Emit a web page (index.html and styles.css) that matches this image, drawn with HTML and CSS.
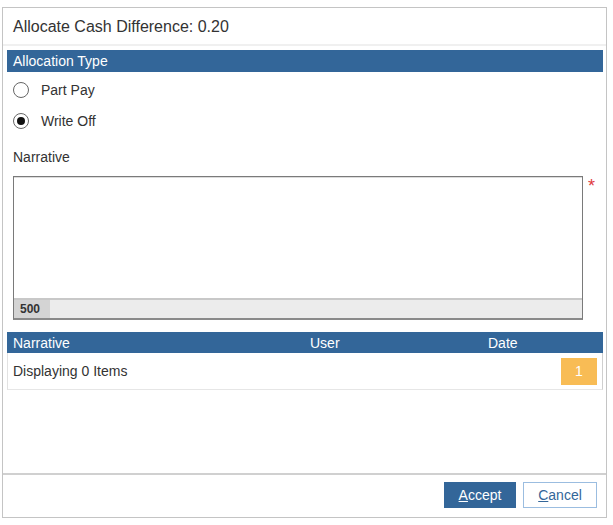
FILE: index.html
```html
<!DOCTYPE html>
<html>
<head>
<meta charset="utf-8">
<link rel="stylesheet" href="styles.css">
</head>
<body>
<div class="dialog">
  <div class="title">Allocate Cash Difference: 0.20</div>
  <div class="content">
    <div class="section-head">Allocation Type</div>
    <div class="radios">
      <label class="radio"><span class="circle"></span>Part Pay</label>
      <label class="radio"><span class="circle checked"></span>Write Off</label>
    </div>
    <div class="field-label">Narrative</div>
    <div class="field-row">
      <div class="textarea">
        <div class="textarea-body"></div>
        <div class="counter-bar"><span class="counter">500</span></div>
      </div>
      <span class="required">*</span>
    </div>
    <div class="grid">
      <div class="grid-head">
        <span>Narrative</span><span>User</span><span>Date</span>
      </div>
      <div class="grid-row">
        <span>Displaying 0 Items</span>
        <span class="page">1</span>
      </div>
    </div>
  </div>
  <div class="footer">
    <button class="btn primary"><u>A</u>ccept</button>
    <button class="btn secondary"><u>C</u>ancel</button>
  </div>
</div>
</body>
</html>
```
FILE: styles.css
```css
html, body {
  margin: 0;
  padding: 0;
  background: #fff;
  font-family: "Liberation Sans", Arial, sans-serif;
  color: #333;
}
body {
  padding: 7px 0 0 2px;
}
.dialog {
  width: 603px;
  height: 509px;
  border: 1px solid #c4c4c4;
  display: flex;
  flex-direction: column;
}
.title {
  height: 36px;
  line-height: 38px;
  padding-left: 10px;
  font-size: 16px;
  color: #333;
  border-bottom: 2px solid #f0f0f0;
}
.content {
  flex: 1;
  padding: 4px 3px 0 4px;
  display: flex;
  flex-direction: column;
}
.section-head {
  height: 22px;
  line-height: 22px;
  background: #336699;
  color: #fff;
  font-size: 14px;
  padding-left: 6px;
}
.radios {
  display: flex;
  flex-direction: column;
  padding-top: 2px;
}
.radio {
  height: 31px;
  display: flex;
  align-items: center;
  font-size: 14px;
  color: #333;
}
.circle {
  width: 14px;
  height: 14px;
  border: 1px solid #666;
  border-radius: 50%;
  margin: 0 12px 0 6px;
  box-sizing: content-box;
  position: relative;
  display: inline-block;
}
.circle.checked::after {
  content: "";
  position: absolute;
  left: 3px;
  top: 3px;
  width: 8px;
  height: 8px;
  border-radius: 50%;
  background: #111;
}
.field-label {
  font-size: 14px;
  height: 20px;
  line-height: 20px;
  margin-top: 11px;
  padding-left: 6px;
}
.field-row {
  display: flex;
  align-items: flex-start;
  margin-top: 9px;
  padding-left: 6px;
}
.textarea {
  width: 570px;
  height: 144px;
  border: 1px solid #7a7a7a;
  border-bottom: 2px solid #8a8a8a;
  display: flex;
  flex-direction: column;
  box-sizing: border-box;
}
.textarea-body {
  flex: 1;
  border-top: 1px solid #dcdcdc;
  background: #fff;
}
.counter-bar {
  height: 18px;
  background: #ececec;
  border-top: 2px solid #c8c8c8;
  display: flex;
}
.counter {
  width: 36px;
  background: #d4d4d4;
  font-size: 12px;
  font-weight: bold;
  color: #333;
  line-height: 18px;
  padding-left: 6px;
  box-sizing: border-box;
}
.required {
  color: #e03a3e;
  font-size: 18px;
  margin-left: 5px;
  line-height: 20px;
}
.grid {
  margin-top: 12px;
}
.grid-head {
  height: 21px;
  line-height: 22px;
  background: #336699;
  color: #fff;
  font-size: 14px;
  display: grid;
  grid-template-columns: 297px 178px 1fr;
}
.grid-head span {
  padding-left: 6px;
}
.grid-row {
  height: 36px;
  border-left: 1px solid #e2e2e2;
  border-right: 1px solid #cfcfcf;
  border-bottom: 1px solid #e6e6e6;
  display: flex;
  align-items: center;
  justify-content: space-between;
  font-size: 14px;
  padding: 0 5px 0 5px;
}
.page {
  width: 36px;
  height: 27px;
  background: #f8bc55;
  color: #fff;
  text-align: center;
  line-height: 27px;
  font-size: 14px;
}
.footer {
  height: 44px;
  border-top: 2px solid #d0d0d0;
  display: flex;
  justify-content: flex-end;
  align-items: flex-start;
  padding: 7px 9px 0 0;
  gap: 7px;
  box-sizing: border-box;
}
.btn {
  height: 26px;
  font-family: "Liberation Sans", Arial, sans-serif;
  font-size: 14px;
  padding: 0;
  margin: 0;
  cursor: pointer;
}
.primary {
  width: 72px;
  background: #336699;
  color: #fff;
  border: 1px solid #336699;
}
.secondary {
  width: 74px;
  background: #fff;
  color: #336699;
  border: 1px solid #9bbde0;
}
```
